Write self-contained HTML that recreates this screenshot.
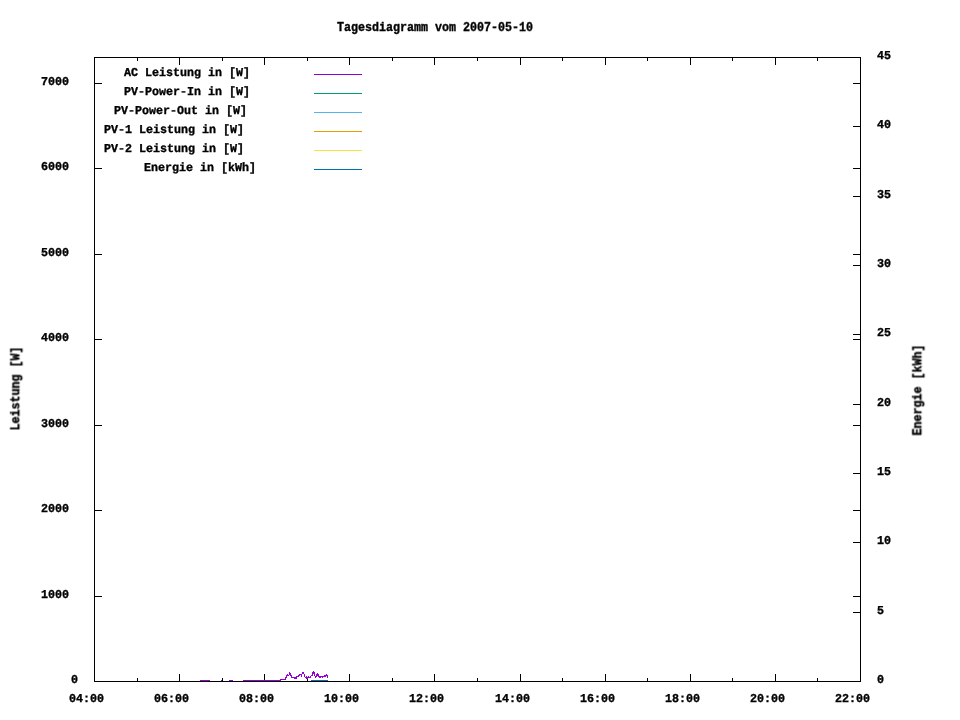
<!DOCTYPE html>
<html><head><meta charset="utf-8"><title>Tagesdiagramm vom 2007-05-10</title>
<style>
html,body{margin:0;padding:0;background:#fff;}
svg{display:block;}
.t{filter:grayscale(1);}
text{font-family:"Liberation Mono",monospace;font-weight:bold;font-size:12px;fill:#000;stroke:#000;stroke-width:0.35px;}
</style></head><body>
<svg width="960" height="720" viewBox="0 0 960 720" shape-rendering="crispEdges">
<rect x="0" y="0" width="960" height="720" fill="#fff"/>
<rect x="94" y="57" width="767" height="1" fill="#000"/>
<rect x="94" y="681" width="767" height="1" fill="#000"/>
<rect x="94" y="57" width="1" height="625" fill="#000"/>
<rect x="860" y="57" width="1" height="625" fill="#000"/>
<rect x="137" y="678" width="1" height="4" fill="#000"/>
<rect x="137" y="57" width="1" height="4" fill="#000"/>
<rect x="179" y="674" width="1" height="8" fill="#000"/>
<rect x="179" y="57" width="1" height="8" fill="#000"/>
<rect x="222" y="678" width="1" height="4" fill="#000"/>
<rect x="222" y="57" width="1" height="4" fill="#000"/>
<rect x="264" y="674" width="1" height="8" fill="#000"/>
<rect x="264" y="57" width="1" height="8" fill="#000"/>
<rect x="307" y="678" width="1" height="4" fill="#000"/>
<rect x="307" y="57" width="1" height="4" fill="#000"/>
<rect x="349" y="674" width="1" height="8" fill="#000"/>
<rect x="349" y="57" width="1" height="8" fill="#000"/>
<rect x="392" y="678" width="1" height="4" fill="#000"/>
<rect x="392" y="57" width="1" height="4" fill="#000"/>
<rect x="434" y="674" width="1" height="8" fill="#000"/>
<rect x="434" y="57" width="1" height="8" fill="#000"/>
<rect x="477" y="678" width="1" height="4" fill="#000"/>
<rect x="477" y="57" width="1" height="4" fill="#000"/>
<rect x="520" y="674" width="1" height="8" fill="#000"/>
<rect x="520" y="57" width="1" height="8" fill="#000"/>
<rect x="562" y="678" width="1" height="4" fill="#000"/>
<rect x="562" y="57" width="1" height="4" fill="#000"/>
<rect x="605" y="674" width="1" height="8" fill="#000"/>
<rect x="605" y="57" width="1" height="8" fill="#000"/>
<rect x="647" y="678" width="1" height="4" fill="#000"/>
<rect x="647" y="57" width="1" height="4" fill="#000"/>
<rect x="690" y="674" width="1" height="8" fill="#000"/>
<rect x="690" y="57" width="1" height="8" fill="#000"/>
<rect x="732" y="678" width="1" height="4" fill="#000"/>
<rect x="732" y="57" width="1" height="4" fill="#000"/>
<rect x="775" y="674" width="1" height="8" fill="#000"/>
<rect x="775" y="57" width="1" height="8" fill="#000"/>
<rect x="817" y="678" width="1" height="4" fill="#000"/>
<rect x="817" y="57" width="1" height="4" fill="#000"/>
<rect x="94" y="596" width="8" height="1" fill="#000"/>
<rect x="853" y="596" width="8" height="1" fill="#000"/>
<rect x="94" y="510" width="8" height="1" fill="#000"/>
<rect x="853" y="510" width="8" height="1" fill="#000"/>
<rect x="94" y="425" width="8" height="1" fill="#000"/>
<rect x="853" y="425" width="8" height="1" fill="#000"/>
<rect x="94" y="339" width="8" height="1" fill="#000"/>
<rect x="853" y="339" width="8" height="1" fill="#000"/>
<rect x="94" y="254" width="8" height="1" fill="#000"/>
<rect x="853" y="254" width="8" height="1" fill="#000"/>
<rect x="94" y="168" width="8" height="1" fill="#000"/>
<rect x="853" y="168" width="8" height="1" fill="#000"/>
<rect x="94" y="83" width="8" height="1" fill="#000"/>
<rect x="853" y="83" width="8" height="1" fill="#000"/>
<rect x="853" y="612" width="8" height="1" fill="#000"/>
<rect x="853" y="542" width="8" height="1" fill="#000"/>
<rect x="853" y="473" width="8" height="1" fill="#000"/>
<rect x="853" y="404" width="8" height="1" fill="#000"/>
<rect x="853" y="334" width="8" height="1" fill="#000"/>
<rect x="853" y="265" width="8" height="1" fill="#000"/>
<rect x="853" y="196" width="8" height="1" fill="#000"/>
<rect x="853" y="126" width="8" height="1" fill="#000"/>
<rect x="314" y="74" width="48" height="1" fill="#9400d3"/>
<rect x="314" y="93" width="48" height="1" fill="#009e73"/>
<rect x="314" y="112" width="48" height="1" fill="#56b4e9"/>
<rect x="314" y="131" width="48" height="1" fill="#e69f00"/>
<rect x="314" y="150" width="48" height="1" fill="#f0e442"/>
<rect x="314" y="169" width="48" height="1" fill="#0072b2"/>
<rect x="200" y="680" width="10" height="1" fill="#9400d3"/>
<rect x="221" y="680" width="1" height="1" fill="#9400d3"/>
<rect x="229" y="680" width="4" height="1" fill="#9400d3"/>
<rect x="243" y="680" width="38" height="1" fill="#9400d3"/>
<path fill="#9400d3" d="M280 679h1v1h-1zM281 679h1v1h-1zM282 679h1v1h-1zM283 679h1v1h-1zM284 679h1v1h-1zM285 677h1v3h-1zM286 675h1v3h-1zM287 674h1v2h-1zM288 675h1v1h-1zM289 672h1v3h-1zM290 673h1v3h-1zM291 675h1v3h-1zM292 677h1v1h-1zM293 677h1v1h-1zM294 677h1v2h-1zM295 677h1v2h-1zM296 676h1v3h-1zM297 676h1v1h-1zM298 675h1v2h-1zM299 674h1v2h-1zM300 674h1v1h-1zM301 674h1v3h-1zM302 672h1v2h-1zM303 672h1v2h-1zM304 674h1v3h-1zM305 677h1v1h-1zM306 676h1v3h-1zM307 677h1v2h-1zM308 676h1v2h-1zM309 677h1v1h-1zM310 676h1v2h-1zM311 675h1v1h-1zM312 672h1v4h-1zM313 671h1v3h-1zM314 672h1v4h-1zM315 676h1v2h-1zM316 674h1v3h-1zM317 673h1v3h-1zM318 674h1v3h-1zM319 676h1v2h-1zM320 676h1v2h-1zM321 676h1v1h-1zM322 676h1v2h-1zM323 676h1v1h-1zM324 675h1v2h-1zM325 675h1v2h-1zM326 674h1v2h-1zM327 675h1v3h-1z"/>
<rect x="311" y="680" width="17" height="1" fill="#0072b2"/>
<g class="t">
<text transform="translate(69,702) rotate(0.03)" textLength="35" lengthAdjust="spacingAndGlyphs">04:00</text>
<text transform="translate(154,702) rotate(0.03)" textLength="35" lengthAdjust="spacingAndGlyphs">06:00</text>
<text transform="translate(239,702) rotate(0.03)" textLength="35" lengthAdjust="spacingAndGlyphs">08:00</text>
<text transform="translate(324,702) rotate(0.03)" textLength="35" lengthAdjust="spacingAndGlyphs">10:00</text>
<text transform="translate(409,702) rotate(0.03)" textLength="35" lengthAdjust="spacingAndGlyphs">12:00</text>
<text transform="translate(495,702) rotate(0.03)" textLength="35" lengthAdjust="spacingAndGlyphs">14:00</text>
<text transform="translate(580,702) rotate(0.03)" textLength="35" lengthAdjust="spacingAndGlyphs">16:00</text>
<text transform="translate(665,702) rotate(0.03)" textLength="35" lengthAdjust="spacingAndGlyphs">18:00</text>
<text transform="translate(750,702) rotate(0.03)" textLength="35" lengthAdjust="spacingAndGlyphs">20:00</text>
<text transform="translate(835,702) rotate(0.03)" textLength="35" lengthAdjust="spacingAndGlyphs">22:00</text>
<text transform="translate(71,683) rotate(0.03)" textLength="7" lengthAdjust="spacingAndGlyphs">0</text>
<text transform="translate(41,598) rotate(0.03)" textLength="28" lengthAdjust="spacingAndGlyphs">1000</text>
<text transform="translate(41,512) rotate(0.03)" textLength="28" lengthAdjust="spacingAndGlyphs">2000</text>
<text transform="translate(41,427) rotate(0.03)" textLength="28" lengthAdjust="spacingAndGlyphs">3000</text>
<text transform="translate(41,341) rotate(0.03)" textLength="28" lengthAdjust="spacingAndGlyphs">4000</text>
<text transform="translate(41,256) rotate(0.03)" textLength="28" lengthAdjust="spacingAndGlyphs">5000</text>
<text transform="translate(41,170) rotate(0.03)" textLength="28" lengthAdjust="spacingAndGlyphs">6000</text>
<text transform="translate(41,85) rotate(0.03)" textLength="28" lengthAdjust="spacingAndGlyphs">7000</text>
<text transform="translate(877,683) rotate(0.03)" textLength="7" lengthAdjust="spacingAndGlyphs">0</text>
<text transform="translate(877,614) rotate(0.03)" textLength="7" lengthAdjust="spacingAndGlyphs">5</text>
<text transform="translate(877,544) rotate(0.03)" textLength="14" lengthAdjust="spacingAndGlyphs">10</text>
<text transform="translate(877,475) rotate(0.03)" textLength="14" lengthAdjust="spacingAndGlyphs">15</text>
<text transform="translate(877,406) rotate(0.03)" textLength="14" lengthAdjust="spacingAndGlyphs">20</text>
<text transform="translate(877,336) rotate(0.03)" textLength="14" lengthAdjust="spacingAndGlyphs">25</text>
<text transform="translate(877,267) rotate(0.03)" textLength="14" lengthAdjust="spacingAndGlyphs">30</text>
<text transform="translate(877,198) rotate(0.03)" textLength="14" lengthAdjust="spacingAndGlyphs">35</text>
<text transform="translate(877,128) rotate(0.03)" textLength="14" lengthAdjust="spacingAndGlyphs">40</text>
<text transform="translate(877,59) rotate(0.03)" textLength="14" lengthAdjust="spacingAndGlyphs">45</text>
<text transform="translate(337,31) rotate(0.03)" textLength="196" lengthAdjust="spacingAndGlyphs">Tagesdiagramm vom 2007-05-10</text>
<g transform="translate(19.3,430.5) rotate(-90)"><text transform="translate(0,0) rotate(0.03)" textLength="84" lengthAdjust="spacingAndGlyphs">Leistung [W]</text></g>
<g transform="translate(921.3,435.5) rotate(-90)"><text transform="translate(0,0) rotate(0.03)" textLength="91" lengthAdjust="spacingAndGlyphs">Energie [kWh]</text></g>
<text transform="translate(124,76) rotate(0.03)" textLength="126" lengthAdjust="spacingAndGlyphs">AC Leistung in [W]</text>
<text transform="translate(124,95) rotate(0.03)" textLength="126" lengthAdjust="spacingAndGlyphs">PV-Power-In in [W]</text>
<text transform="translate(114,114) rotate(0.03)" textLength="133" lengthAdjust="spacingAndGlyphs">PV-Power-Out in [W]</text>
<text transform="translate(104,133) rotate(0.03)" textLength="140" lengthAdjust="spacingAndGlyphs">PV-1 Leistung in [W]</text>
<text transform="translate(104,152) rotate(0.03)" textLength="140" lengthAdjust="spacingAndGlyphs">PV-2 Leistung in [W]</text>
<text transform="translate(144,171) rotate(0.03)" textLength="112" lengthAdjust="spacingAndGlyphs">Energie in [kWh]</text>
</g>
</svg>
</body></html>
